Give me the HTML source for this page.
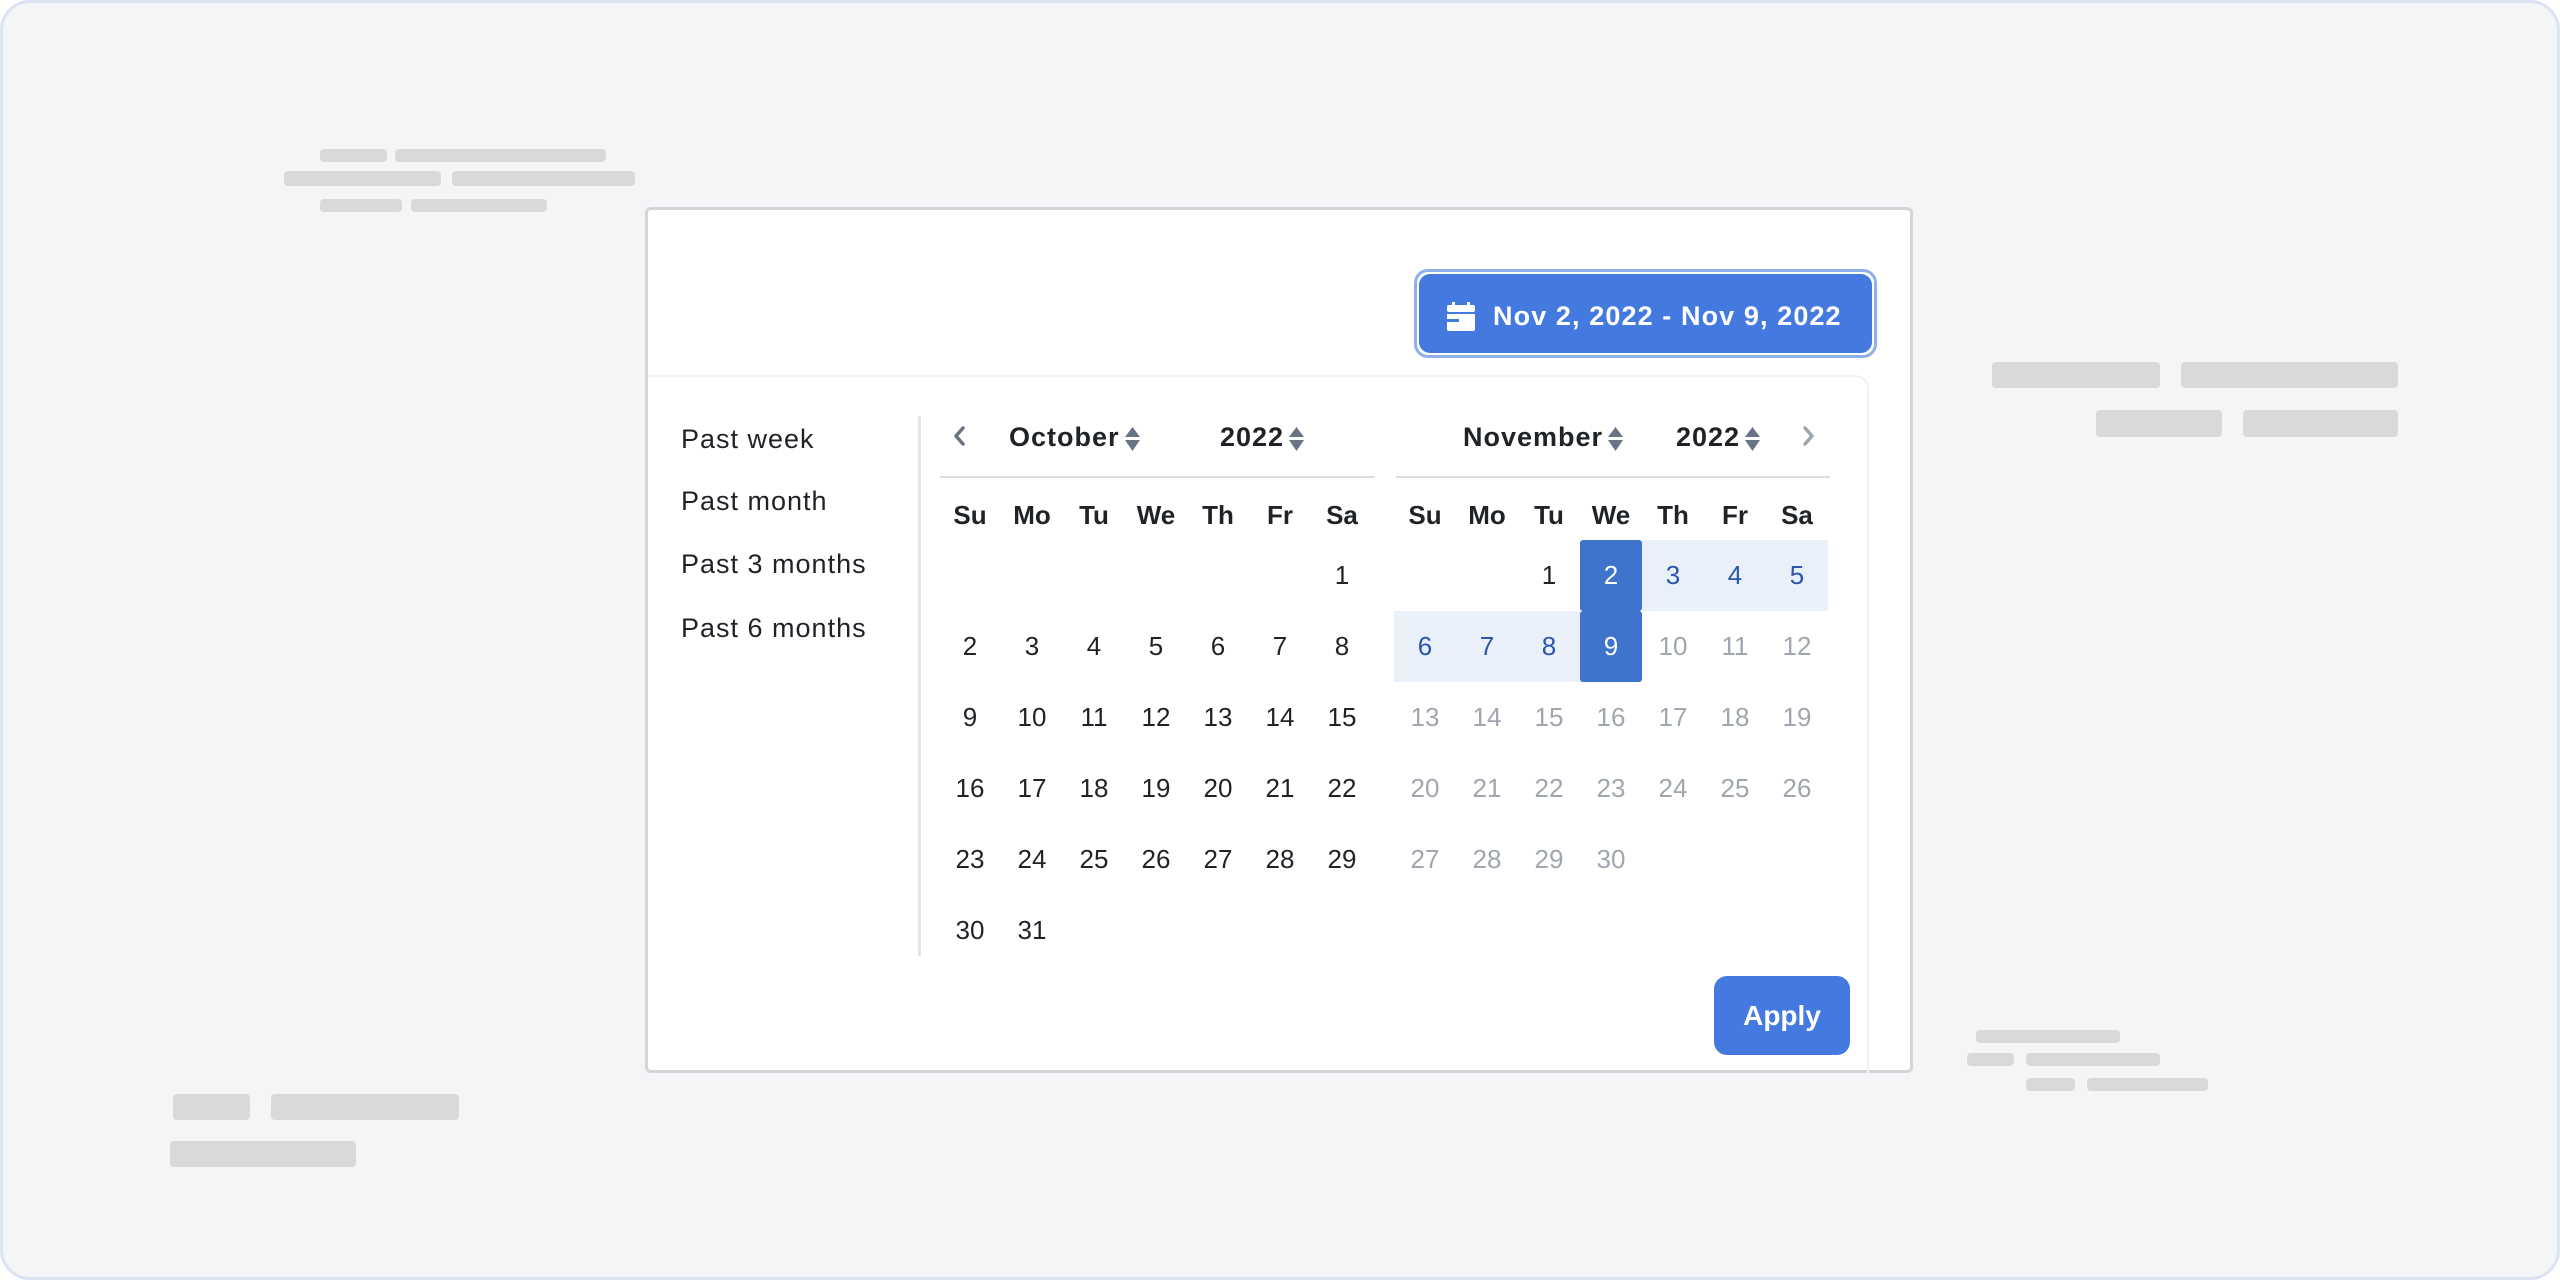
<!DOCTYPE html>
<html><head><meta charset="utf-8"><style>
*{margin:0;padding:0;box-sizing:border-box}
body{width:2560px;height:1280px;background:#fff;font-family:"Liberation Sans",sans-serif;position:relative;overflow:hidden}
.page{position:absolute;left:0;top:0;width:2560px;height:1280px;background:#f4f5f7;border:3px solid #dbe4f1;border-radius:30px}
.bar{position:absolute;background:#d9d9d9;border-radius:4px}
.modal{position:absolute;left:645px;top:207px;width:1268px;height:866px;background:#fff;border:3px solid #d3d5d8;border-radius:6px}
.panel{position:absolute;left:648px;top:375px;width:1221px;height:698px;border:2px solid #eff1f3;border-top-right-radius:14px;border-bottom:none;border-left:none}
.btnring{position:absolute;left:1414px;top:269px;width:463px;height:89px;border:3px solid #8fb0ea;border-radius:14px;background:#fff}
.btn{position:absolute;left:1419px;top:274px;width:453px;height:79px;background:#4479e0;border-radius:11px;color:#fff;font-size:27px;font-weight:bold;line-height:84px;padding-left:74px;letter-spacing:1.1px}
.t{position:absolute;color:#1f2328;font-size:27px;letter-spacing:1px}
.grid{position:absolute;display:grid;grid-template-columns:repeat(7,62px);grid-auto-rows:71px;font-size:26px;color:#1f2328}
.grid div{display:flex;align-items:center;justify-content:center}
.hd{position:absolute;display:grid;grid-template-columns:repeat(7,62px);font-size:26px;font-weight:bold;color:#1f2328}
.hd div{text-align:center}
.g{color:#a0a6b0}
.l{background:#e9f0f9;color:#2a56ad}
.d{background:#3e74cc;color:#fff;border-radius:3px}
.sort{display:inline-block;vertical-align:middle;margin-left:4px}
</style></head><body>
<div class="page"></div>
<div class="bar" style="left:320px;top:149px;width:67px;height:13px"></div>
<div class="bar" style="left:395px;top:149px;width:211px;height:13px"></div>
<div class="bar" style="left:284px;top:171px;width:157px;height:15px"></div>
<div class="bar" style="left:452px;top:171px;width:183px;height:15px"></div>
<div class="bar" style="left:320px;top:199px;width:82px;height:13px"></div>
<div class="bar" style="left:411px;top:199px;width:136px;height:13px"></div>
<div class="bar" style="left:1992px;top:362px;width:168px;height:26px"></div>
<div class="bar" style="left:2181px;top:362px;width:217px;height:26px"></div>
<div class="bar" style="left:2096px;top:410px;width:126px;height:27px"></div>
<div class="bar" style="left:2243px;top:410px;width:155px;height:27px"></div>
<div class="bar" style="left:1976px;top:1030px;width:144px;height:13px"></div>
<div class="bar" style="left:1967px;top:1053px;width:47px;height:13px"></div>
<div class="bar" style="left:2026px;top:1053px;width:134px;height:13px"></div>
<div class="bar" style="left:2026px;top:1078px;width:49px;height:13px"></div>
<div class="bar" style="left:2087px;top:1078px;width:121px;height:13px"></div>
<div class="bar" style="left:173px;top:1094px;width:77px;height:26px"></div>
<div class="bar" style="left:271px;top:1094px;width:188px;height:26px"></div>
<div class="bar" style="left:170px;top:1141px;width:186px;height:26px"></div>

<div class="modal"></div>
<div class="panel"></div>
<div class="btnring"></div>
<div class="btn">Nov 2, 2022 - Nov 9, 2022</div>
<svg style="position:absolute;left:1447px;top:302px" width="28" height="29" viewBox="0 0 28 29">
<rect x="5" y="0" width="3" height="5" fill="#fff"/><rect x="20" y="0" width="3" height="5" fill="#fff"/>
<rect x="0" y="3" width="28" height="7" rx="2" fill="#fff"/>
<rect x="0" y="12" width="28" height="5" fill="#fff"/>
<path d="M0 19 H9 V17 H28 V27 Q28 29 26 29 H2 Q0 29 0 27 Z" fill="#fff"/>
<rect x="0" y="17" width="12" height="3" fill="#4479e0"/>
</svg>

<div class="t" style="left:681px;top:424px">Past week</div>
<div class="t" style="left:681px;top:486px">Past month</div>
<div class="t" style="left:681px;top:549px">Past 3 months</div>
<div class="t" style="left:681px;top:613px">Past 6 months</div>
<div style="position:absolute;left:918px;top:416px;width:3px;height:540px;background:#e3e5e8"></div>

<svg style="position:absolute;left:950px;top:424px" width="20" height="24"><path d="M13 4 L6 12 L13 20" stroke="#6b7380" stroke-width="3.5" fill="none" stroke-linecap="round" stroke-linejoin="round"/></svg>
<svg style="position:absolute;left:1798px;top:424px" width="20" height="24"><path d="M7 4 L14 12 L7 20" stroke="#a0a6b0" stroke-width="3.5" fill="none" stroke-linecap="round" stroke-linejoin="round"/></svg>

<div class="t" style="left:1009px;top:422px;font-weight:bold">October<svg class="sort" width="17" height="26" viewBox="0 0 17 26"><path d="M8.5 1 L16 11 H1 Z M1 14 H16 L8.5 25 Z" fill="#687384"/></svg></div>
<div class="t" style="left:1220px;top:422px;font-weight:bold">2022<svg class="sort" width="17" height="26" viewBox="0 0 17 26"><path d="M8.5 1 L16 11 H1 Z M1 14 H16 L8.5 25 Z" fill="#687384"/></svg></div>
<div class="t" style="left:1463px;top:422px;font-weight:bold">November<svg class="sort" width="17" height="26" viewBox="0 0 17 26"><path d="M8.5 1 L16 11 H1 Z M1 14 H16 L8.5 25 Z" fill="#687384"/></svg></div>
<div class="t" style="left:1676px;top:422px;font-weight:bold">2022<svg class="sort" width="17" height="26" viewBox="0 0 17 26"><path d="M8.5 1 L16 11 H1 Z M1 14 H16 L8.5 25 Z" fill="#687384"/></svg></div>

<div style="position:absolute;left:940px;top:476px;width:435px;height:2px;background:#dcdee2"></div>
<div style="position:absolute;left:1396px;top:476px;width:434px;height:2px;background:#dcdee2"></div>

<div class="hd" style="left:939px;top:500px"><div>Su</div><div>Mo</div><div>Tu</div><div>We</div><div>Th</div><div>Fr</div><div>Sa</div></div>
<div class="hd" style="left:1394px;top:500px"><div>Su</div><div>Mo</div><div>Tu</div><div>We</div><div>Th</div><div>Fr</div><div>Sa</div></div>

<div class="grid" style="left:939px;top:540px">
<div></div><div></div><div></div><div></div><div></div><div></div><div>1</div>
<div>2</div><div>3</div><div>4</div><div>5</div><div>6</div><div>7</div><div>8</div>
<div>9</div><div>10</div><div>11</div><div>12</div><div>13</div><div>14</div><div>15</div>
<div>16</div><div>17</div><div>18</div><div>19</div><div>20</div><div>21</div><div>22</div>
<div>23</div><div>24</div><div>25</div><div>26</div><div>27</div><div>28</div><div>29</div>
<div>30</div><div>31</div>
</div>
<div class="grid" style="left:1394px;top:540px">
<div></div><div></div><div>1</div><div class="d">2</div><div class="l">3</div><div class="l">4</div><div class="l">5</div>
<div class="l">6</div><div class="l">7</div><div class="l">8</div><div class="d">9</div><div class="g">10</div><div class="g">11</div><div class="g">12</div>
<div class="g">13</div><div class="g">14</div><div class="g">15</div><div class="g">16</div><div class="g">17</div><div class="g">18</div><div class="g">19</div>
<div class="g">20</div><div class="g">21</div><div class="g">22</div><div class="g">23</div><div class="g">24</div><div class="g">25</div><div class="g">26</div>
<div class="g">27</div><div class="g">28</div><div class="g">29</div><div class="g">30</div>
</div>

<div style="position:absolute;left:1714px;top:976px;width:136px;height:79px;background:#4479e0;border-radius:13px;color:#fff;font-size:28px;font-weight:bold;line-height:79px;text-align:center">Apply</div>
</body></html>
